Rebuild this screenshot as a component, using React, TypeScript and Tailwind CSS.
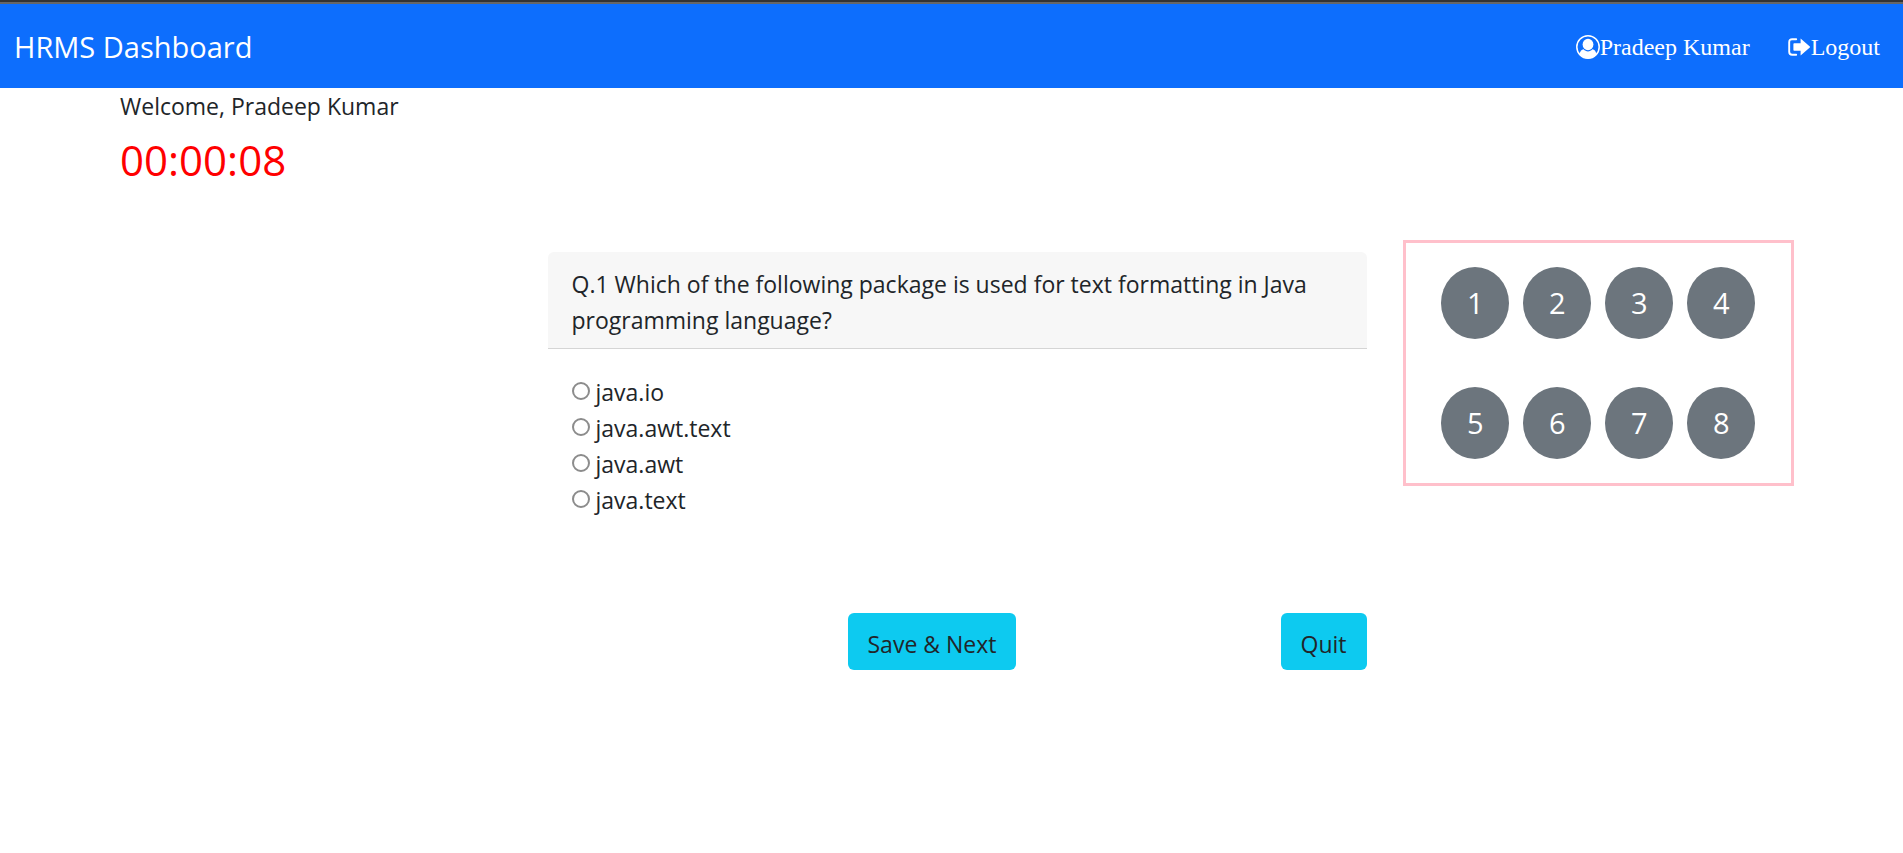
import { useState } from "react";

const options = ["java.io", "java.awt.text", "java.awt", "java.text"];
const questions = [1, 2, 3, 4, 5, 6, 7, 8];

function UserIcon() {
  return (
    <svg viewBox="0 0 24 24" className="size-6" aria-hidden="true">
      <circle cx="12" cy="12" r="11.2" fill="none" stroke="currentColor" strokeWidth="1.5" />
      <path
        fill="currentColor"
        d="M3.4 19.6C4 16.4 5.400 14.600 7.600 14.300 8.800 15.700 10.300 16.400 12 16.400s3.200-.7 4.400-2.100c2.200.3 3.600 2.100 4.200 5.300C18.500 22.200 15.500 23.600 12 23.600s-6.500-1.400-8.600-4z"
      />
      <ellipse cx="12" cy="9.500" rx="5.400" ry="5.800" fill="currentColor" />
    </svg>
  );
}

function LogoutIcon() {
  return (
    <svg viewBox="0 0 23 18" className="h-[18px] w-[23px]" aria-hidden="true">
      <path
        d="M8.200 1.200H4.200Q1.200 1.200 1.200 4.200V13.800Q1.200 16.800 4.200 16.800H8.200"
        fill="none"
        stroke="currentColor"
        strokeWidth="1.9"
        strokeLinecap="round"
      />
      <path
        d="M12.600 .6 21.800 8.400Q22.400 9 21.800 9.600L12.600 17.400V12.700H6.200Q5.400 12.700 5.400 11.900V6.100Q5.400 5.300 6.200 5.300H12.600Z"
        fill="currentColor"
      />
    </svg>
  );
}

export default function App() {
  const [answer, setAnswer] = useState("");

  return (
    <div className="min-h-screen bg-white font-['Open_Sans',sans-serif] text-[23px] leading-9 text-[#212529]">
      <div className="h-1 border-b-2 border-[#666666] bg-[#333333]" />
      <header className="flex h-21 items-center justify-between bg-[#0d6efd] pt-0.5 pr-[23px] pl-3.5 text-white">
        <a href="#" className="text-[29px]">
          HRMS Dashboard
        </a>
        <nav className="flex items-center gap-[38px] font-['Liberation_Serif',serif] text-2xl">
          <a href="#profile" className="flex items-center">
            <UserIcon />
            Pradeep Kumar
          </a>
          <a href="#logout" className="flex items-center">
            <LogoutIcon />
            Logout
          </a>
        </nav>
      </header>

      <main className="pr-[109px] pl-30">
        <p>Welcome, Pradeep Kumar</p>
        <p className="pt-2 text-[42px] leading-14 text-[#ff0000]">00:00:08</p>

        <div className="mt-13 grid grid-cols-12 gap-x-9">
          <form className="col-span-6 col-start-4 pt-3" onSubmit={(e) => e.preventDefault()}>
            <h1 className="rounded-t-md border-b border-[#d5d5d5] bg-[#f7f7f7] px-6 pt-3.5 pb-2.5">
              Q.1 Which of the following package is used for text formatting in Java programming language?
            </h1>
            <div className="px-6 pt-6">
              {options.map((option) => (
                <label key={option} className="flex w-fit items-start gap-1.5 pt-0.5 leading-8.5">
                  <input
                    type="radio"
                    name="answer"
                    value={option}
                    checked={answer === option}
                    onChange={() => setAnswer(option)}
                    className="mt-[7px] size-4.5 appearance-none rounded-full border-2 border-[#8c8c8c] bg-white checked:border-[5px] checked:border-[#0075ff]"
                  />
                  {option}
                </label>
              ))}
            </div>
            <div className="mt-24 flex justify-between pl-75">
              <button type="submit" className="h-[57px] rounded-md bg-[#0dcaf0] px-5 pt-1">
                Save &amp; Next
              </button>
              <button type="button" className="h-[57px] rounded-md bg-[#0dcaf0] px-5 pt-1">
                Quit
              </button>
            </div>
          </form>

          <aside className="col-span-3 self-start border-3 border-[#ffc0cb] py-6">
            <div className="mx-auto grid w-fit grid-cols-4 gap-x-3.5 gap-y-12">
              {questions.map((n) => (
                <button
                  key={n}
                  type="button"
                  className="h-18 w-17 rounded-[50%] bg-[#6c757d] text-[29px] text-white"
                >
                  {n}
                </button>
              ))}
            </div>
          </aside>
        </div>
      </main>
    </div>
  );
}
